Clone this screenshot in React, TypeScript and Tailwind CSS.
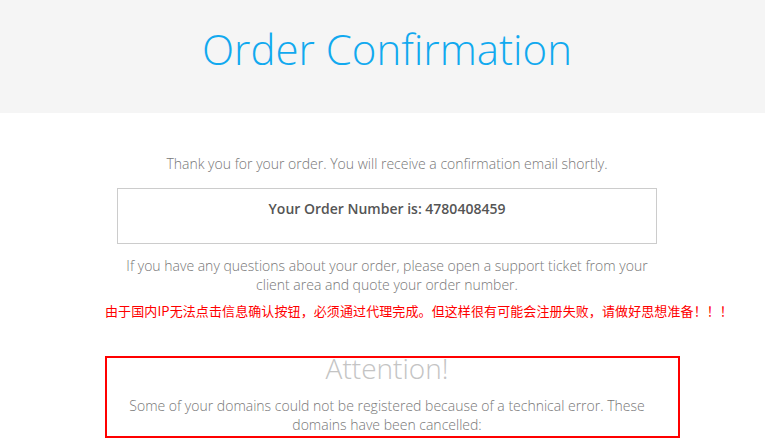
import React from "react";

export default function App() {
  return (
    <div className="w-[765px] min-h-[447px] bg-white font-['Open_Sans',sans-serif] overflow-hidden">
      <header className="h-[113px] bg-[#f5f5f5] pt-[28px] pl-[9px] text-center">
        <h1 className="text-[42px] leading-[42px] font-light text-[#11a9ef]">Order Confirmation</h1>
      </header>
      <div className="ml-[117px] w-[540px]">
        <p className="mt-[41px] text-center text-[14px] leading-[20px] font-light text-[#777]">
          Thank you for your order. You will receive a confirmation email shortly.
        </p>
        <div className="mt-[14px] h-[56px] border border-[#ccc] pt-[10px] text-center">
          <p className="text-[14px] leading-[20px] font-semibold text-[#555]">
            Your Order Number is: 4780408459
          </p>
        </div>
        <p className="mt-[12px] text-center text-[14px] leading-[19px] font-light text-[#777]">
          If you have any questions about your order, please open a support ticket from your client area and quote your order number.
        </p>
        <p className="-ml-[12px] mt-[7px] w-[640px] whitespace-nowrap tracking-[0.1px] text-[13px] leading-[20px] text-[#f00] font-['Noto_Sans_CJK_SC','Open_Sans',sans-serif]">
          由于国内IP无法点击信息确认按钮，必须通过代理完成。但这样很有可能会注册失败，请做好思想准备！！！
        </p>
        <div className="-ml-[12px] mt-[35px] w-[575px] border-2 border-[#f00] h-[82px]">
          <div className="ml-[10px] w-[540px] text-center">
            <h2 className="text-[28px] leading-[20px] font-light text-[#c4c4c4]">Attention!</h2>
            <p className="mt-[18px] text-[14px] leading-[19px] font-light text-[#777]">
              Some of your domains could not be registered because of a technical error. These domains have been cancelled:
            </p>
          </div>
        </div>
      </div>
    </div>
  );
}
